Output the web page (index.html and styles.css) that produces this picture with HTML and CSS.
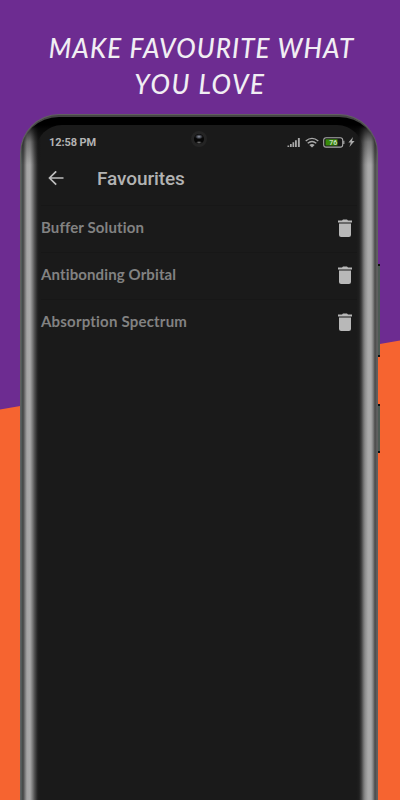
FILE: index.html
```
<!doctype html>
<html>
<head>
<meta charset="utf-8">
<title>Favourites</title>
<link rel="stylesheet" href="styles.css">
</head>

<body>
<div class="page">
	<h1><span class="line1">MAKE FAVOURITE WHAT</span><span class="line2">YOU LOVE</span></h1>
	<div class="phone">
		<i class="key volume"></i>
		<i class="key power"></i>
		<div class="body">
			<div class="screen">
				<div class="status">
					<span class="time">12:58 PM</span>
					<svg class="signal" width="14" height="11" viewBox="0 0 14 11"><path d="M.5 8.500h1.700V10H.5zM3 7h1.700v3H3zM5.500 5.300h1.700V10H5.500zM8 3.200h1.800V10H8zM10.900 1h1.900v9h-1.900z"/></svg>
					<svg class="wifi" width="14" height="11" viewBox="0 0 14 11"><path d="M.7 4Q7-1.2 13.3 4M2.700 6.300Q7 2.600 11.300 6.300" fill="none" stroke="#a9a9a9" stroke-width="1.4"/><path d="M4.300 8Q7 5.800 9.700 8L7 10.600z"/></svg>
					<svg class="battery" width="22" height="11" viewBox="0 0 22 11"><rect x=".7" y=".7" width="19" height="9.4" rx="2.4" fill="#171717" stroke="#a9a9a9" stroke-width="1.1"/><path d="M2.5 2.3h12v6.2h-12z" fill="#388a0a"/><path d="M20.2 3.8h1.2v3.2h-1.2z"/><text x="10.2" y="8.1">76</text></svg>
					<svg class="bolt" width="7" height="10" viewBox="0 0 7 10"><path d="M5 0L.4 5.600h2.400L1.400 10l5.200-6H4z"/></svg>
				</div>
				<div class="bar">
					<svg width="16" height="16" viewBox="0 0 16 16"><path d="M15.500 7H1.500M8.200.3L1.500 7L8.200 13.700" fill="none" stroke="#bcbcbc" stroke-width="1.7"/></svg>
					<h2>Favourites</h2>
				</div>
				<ul>
					<li><span class="item1">Buffer Solution</span><svg width="16" height="19" viewBox="0 0 16 19"><path d="M1 1.500h4L6 .4h4l1 1.100h4v2H1zM2 4.500h12v11.400q0 2.100-2.100 2.100H4.100Q2 18 2 15.900z"/></svg></li>
					<li><span class="item2">Antibonding Orbital</span><svg width="16" height="19" viewBox="0 0 16 19"><path d="M1 1.500h4L6 .4h4l1 1.100h4v2H1zM2 4.500h12v11.400q0 2.100-2.100 2.100H4.100Q2 18 2 15.900z"/></svg></li>
					<li><span class="item3">Absorption Spectrum</span><svg width="16" height="19" viewBox="0 0 16 19"><path d="M1 1.500h4L6 .4h4l1 1.100h4v2H1zM2 4.500h12v11.400q0 2.100-2.100 2.100H4.100Q2 18 2 15.900z"/></svg></li>
				</ul>
			</div>
			<i class="camera"></i>
		</div>
	</div>
</div>
</body>
</html>
```
FILE: styles.css
```
* {margin:0; padding:0; list-style:none; box-sizing:border-box;}

body {background:#6d2c91;}
.page {width:400px; height:800px; position:relative; overflow:hidden; background:#6d2c91;}
/* orange half */
.page:before {content:""; position:absolute; left:0; top:0; width:400px; height:800px; background:#f66430; clip-path:polygon(0 409.5px, 400px 340.5px, 400px 800px, 0 800px);}

h1 {position:relative; height:114px; padding-top:31px; font:italic 500 26px/35.5px Lato, sans-serif; color:#f1eef3; text-align:center; white-space:nowrap;}
h1 span {display:block;}
.line1 {letter-spacing:1.1px; padding-left:3px;}
.line2 {letter-spacing:1.6px;}

.phone {position:relative; width:358px; height:730px; margin-left:20px; padding:1px; border-radius:39px 39px 0 0; background:#606060;}
.body {position:relative; height:100%; padding:8px 14px 0 15px; border-radius:38px 38px 0 0; overflow:hidden;
	border-top:2px solid #454545;
	background:linear-gradient(#000 8px, rgba(0,0,0,.75) 12px, rgba(0,0,0,.3) 25px, transparent 48px),
	linear-gradient(90deg, #55615f 0, #444 2px, #777 4px, #a5a5a5 6px, #a9a9a9 9px, #858585 11px, #484848 14px, #222 17px, #1a1a1a 20px, #1a1a1a 334px, #282828 338px, #555 341px, #8c8c8c 344px, #a9a9a9 347px, #a9a9a9 350px, #848484 352px, #4a4a4a 354px, #626262 356px);}
.screen {height:100%; border-radius:26px 26px 0 0; background:linear-gradient(90deg, transparent, #1a1a1a 5px, #1a1a1a 320px, transparent);}

.key {position:absolute; left:358px; width:2px; background:#4d5a54; border-top:2px solid #111; border-bottom:2px solid #111;}
.volume {top:150px; height:93px;}
.power {top:290px; height:49px;}

.status {display:flex; align-items:center; height:32px; padding:2px 8px 0 13px; font:700 11px/14px Roboto, sans-serif; letter-spacing:-.1px; color:#b3b3b3;}
.status svg, li svg {fill:#a9a9a9; flex:none;}
.time {margin-right:auto; padding-top:1px;}
.wifi {margin-left:4px;}
.battery {margin-left:4px;}
.battery text {font:700 7px Roboto, sans-serif; fill:#c4d6bc; text-anchor:middle;}
.bolt {margin-left:3px;}

.bar {display:flex; align-items:center; height:48px; padding:0 0 4px 12px;}
.bar h2 {margin-left:33px; font:500 19px/24px Roboto, sans-serif; letter-spacing:-.1px; color:#b3b3b3;}

li {display:flex; align-items:center; justify-content:space-between; height:47px; padding:1px 10px 2px 5px; background:linear-gradient(#171717, #171717) 5px 0/316px 1px no-repeat; font:700 15px/20px Lato, sans-serif; color:#828282;}
li span {padding-bottom:2px;}
li svg {fill:#b8b8b8;}
.item1, .item2 {letter-spacing:.12px;}
.item3 {letter-spacing:.2px;}

.camera {position:absolute; left:170px; top:14px; width:16px; height:16px; border-radius:50%; border:3px solid #242424; background:radial-gradient(ellipse 4px 2.5px at 50% 27%, #8f95a6, transparent), radial-gradient(ellipse 3px 1.5px at 50% 85%, #777, transparent), #060606;}
```
